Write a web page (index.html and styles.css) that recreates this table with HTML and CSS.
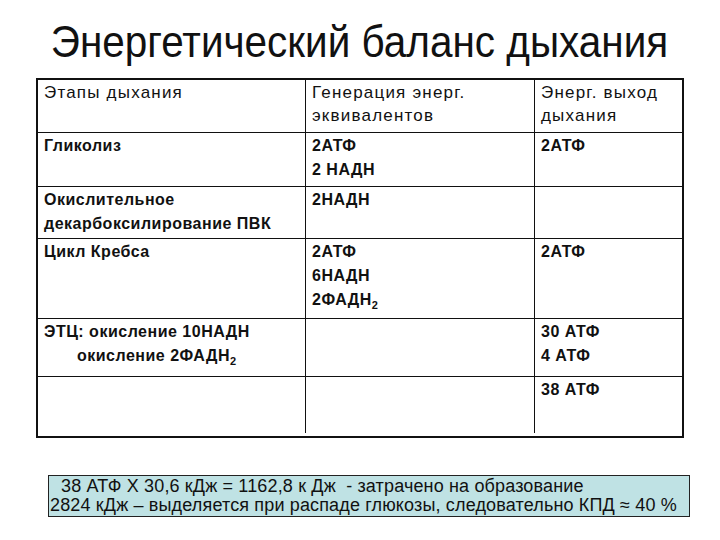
FILE: index.html
```html
<!DOCTYPE html>
<html lang="ru">
<head>
<meta charset="utf-8">
<title>Энергетический баланс дыхания</title>
<link rel="stylesheet" href="styles.css">
</head>
<body>
<div class="slide">
  <h1 class="title"><span class="title-text">Энергетический баланс дыхания</span></h1>
  <div class="balance">
    <div class="cell head">Этапы дыхания</div>
    <div class="cell head">Генерация энерг.<br>эквивалентов</div>
    <div class="cell head last">Энерг. выход<br>дыхания</div>

    <div class="cell">Гликолиз</div>
    <div class="cell">2АТФ<br>2 НАДН</div>
    <div class="cell last">2АТФ</div>

    <div class="cell">Окислительное<br>декарбоксилирование ПВК</div>
    <div class="cell">2НАДН</div>
    <div class="cell last"></div>

    <div class="cell">Цикл Кребса</div>
    <div class="cell">2АТФ<br>6НАДН<br>2ФАДН<sub>2</sub></div>
    <div class="cell last">2АТФ</div>

    <div class="cell">ЭТЦ: окисление 10НАДН<br><span class="indent">окисление 2ФАДН<sub>2</sub></span></div>
    <div class="cell"></div>
    <div class="cell last">30 АТФ<br>4 АТФ</div>

    <div class="cell bottom"></div>
    <div class="cell bottom"></div>
    <div class="cell bottom last">38 АТФ</div>
  </div>
  <div class="note">
    <p class="note-line first">38 АТФ Х 30,6 кДж = 1162,8 к Дж&nbsp; - затрачено на образование</p>
    <p class="note-line">2824 кДж – выделяется при распаде глюкозы, следовательно КПД ≈ 40 %</p>
  </div>
</div>
</body>
</html>
```
FILE: styles.css
```css
html, body {
  margin: 0;
  padding: 0;
  background: #ffffff;
}

.slide {
  width: 720px;
  height: 540px;
  position: relative;
  font-family: "Liberation Sans", Arial, sans-serif;
  color: #111111;
}

.title {
  margin: 0;
  padding-top: 17px;
  height: 78px;
  box-sizing: border-box;
  text-align: center;
  font-weight: normal;
  font-size: 44px;
  line-height: 50px;
  white-space: nowrap;
}

.title-text {
  display: inline-block;
  transform: scaleX(0.92);
  transform-origin: center;
}

.balance {
  margin-left: 36px;
  width: 648px;
  height: 360px;
  box-sizing: border-box;
  border: 2px solid #111111;
  display: grid;
  grid-template-columns: 268px 229px 147px;
  grid-template-rows: 53px 54px 52px 80px 58px 56px;
  font-size: 16px;
  line-height: 24px;
  font-weight: bold;
  letter-spacing: 0.5px;
}

.cell {
  border-right: 1px solid #111111;
  border-bottom: 1px solid #111111;
  padding: 1px 4px 0 6px;
  overflow: hidden;
  white-space: nowrap;
}

.cell.last {
  border-right: none;
}

.cell.bottom {
  border-bottom: none;
}

.cell.head {
  font-weight: normal;
  font-size: 17px;
  line-height: 23px;
  letter-spacing: 1.2px;
}

.balance sub {
  font-size: 11px;
  line-height: 0;
  vertical-align: -4px;
  letter-spacing: 0;
}

.indent {
  display: inline-block;
  padding-left: 33px;
}

.note {
  position: absolute;
  left: 48px;
  top: 475px;
  width: 642px;
  height: 42px;
  box-sizing: border-box;
  background: #bfe2e4;
  border: 1px solid #222222;
  font-size: 18px;
  line-height: 19px;
  letter-spacing: 0.15px;
  padding: 1px 0 0 1px;
}

.note-line {
  margin: 0;
  white-space: nowrap;
}

.note-line.first {
  padding-left: 11px;
}
```
